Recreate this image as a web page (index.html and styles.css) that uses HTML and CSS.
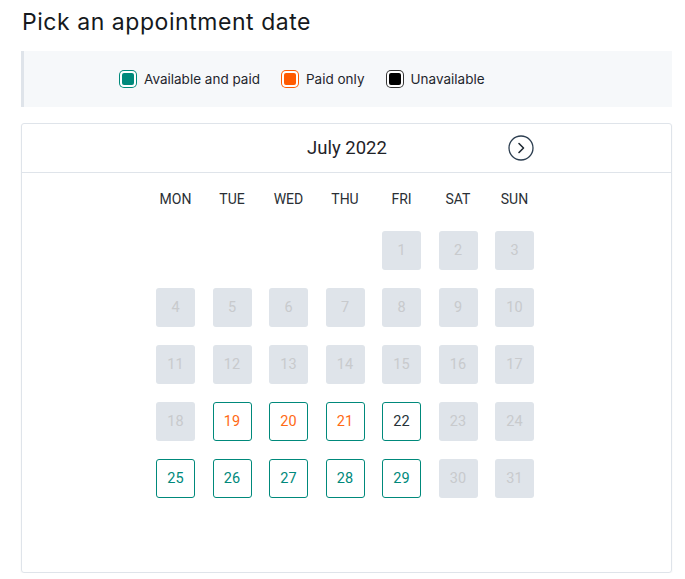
FILE: index.html
```html
<!DOCTYPE html>
<html lang="en">

<head>
  <meta charset="UTF-8">
  <meta name="viewport" content="width=device-width, initial-scale=1.0">
  <title>Pick an appointment date</title>
  <link rel="stylesheet" href="styles.css">
</head>

<body>
  <h1 class="title">Pick an appointment date</h1>
  <div class="legend">
    <div class="legend-item"><span class="swatch swatch-paid"></span>Available and paid</div>
    <div class="legend-item"><span class="swatch swatch-only"></span>Paid only</div>
    <div class="legend-item"><span class="swatch swatch-none"></span>Unavailable</div>
  </div>
  <div class="calendar">
    <div class="cal-head">
      <div class="month">July 2022</div>
      <button class="next" aria-label="Next month">
        <svg width="26" height="26" viewBox="0 0 26 26">
          <circle cx="13" cy="13" r="12" fill="none" stroke="#2c3e50" stroke-width="1.3" />
          <path d="M11 8.5 L15.5 13 L11 17.5" fill="none" stroke="#1f2933" stroke-width="1.6" stroke-linecap="round" stroke-linejoin="round" />
        </svg>
      </button>
    </div>
    <div class="grid">
      <div class="dow">MON</div>
      <div class="dow">TUE</div>
      <div class="dow">WED</div>
      <div class="dow">THU</div>
      <div class="dow">FRI</div>
      <div class="dow">SAT</div>
      <div class="dow">SUN</div>

      <div></div><div></div><div></div><div></div>
      <div class="day off">1</div>
      <div class="day off">2</div>
      <div class="day off">3</div>

      <div class="day off">4</div>
      <div class="day off">5</div>
      <div class="day off">6</div>
      <div class="day off">7</div>
      <div class="day off">8</div>
      <div class="day off">9</div>
      <div class="day off">10</div>

      <div class="day off">11</div>
      <div class="day off">12</div>
      <div class="day off">13</div>
      <div class="day off">14</div>
      <div class="day off">15</div>
      <div class="day off">16</div>
      <div class="day off">17</div>

      <div class="day off">18</div>
      <div class="day open only">19</div>
      <div class="day open only">20</div>
      <div class="day open only">21</div>
      <div class="day open today">22</div>
      <div class="day off">23</div>
      <div class="day off">24</div>

      <div class="day open">25</div>
      <div class="day open">26</div>
      <div class="day open">27</div>
      <div class="day open">28</div>
      <div class="day open">29</div>
      <div class="day off">30</div>
      <div class="day off">31</div>
    </div>
  </div>
</body>

</html>
```

FILE: styles.css
```css
body {
  margin: 0;
  padding: 0 13px 0 21px;
  font-family: Inter, "Noto Sans", sans-serif;
  color: #1c2329;
  background: #fff;
}

.title {
  margin: 0;
  padding: 8px 0 0 1px;
  height: 51px;
  box-sizing: border-box;
  font-size: 23px;
  font-weight: 400;
  letter-spacing: 0.55px;
  line-height: 28px;
  color: #15191d;
}

.legend {
  display: flex;
  align-items: center;
  gap: 22px;
  height: 56px;
  padding-left: 96px;
  background: #f6f8fa;
  border-left: 3px solid #dfe4ea;
}

.legend-item {
  display: flex;
  align-items: center;
  font-size: 13.5px;
  color: #1f262d;
}

.swatch {
  width: 12px;
  height: 12px;
  margin-right: 8px;
  border-radius: 4px;
  border: 2px solid #fff;
  box-shadow: 0 0 0 1px #00897b;
}

.swatch-paid {
  background: #00897b;
}

.swatch-only {
  background: #ff5a00;
  box-shadow: 0 0 0 1px #ff5a00;
}

.swatch-none {
  background: #000;
  box-shadow: 0 0 0 1px #333;
}

.calendar {
  margin-top: 16px;
  height: 450px;
  box-sizing: border-box;
  border: 1px solid #dfe4ea;
  border-radius: 3px;
  box-shadow: 0 1px 2px rgba(0, 0, 0, 0.05);
  font-family: Roboto, "Liberation Sans", sans-serif;
}

.cal-head {
  position: relative;
  display: flex;
  align-items: center;
  justify-content: center;
  height: 48px;
  border-bottom: 1px solid #dfe4ea;
}

.month {
  font-size: 18.5px;
  color: #1f2328;
  padding-left: 1px;
}

.next {
  position: absolute;
  top: 11px;
  left: 486px;
  padding: 0;
  border: 0;
  background: none;
  width: 26px;
  height: 26px;
  cursor: pointer;
}

.grid {
  display: grid;
  grid-template-columns: repeat(7, 56.5px);
  grid-template-rows: 49px;
  grid-auto-rows: 57px;
  justify-content: center;
  justify-items: center;
  padding-top: 9px;
  padding-right: 3px;
}

.dow {
  align-self: start;
  font-size: 14px;
  color: #2a2f35;
  line-height: 34px;
  height: 48px;
}

.day {
  width: 39px;
  height: 39px;
  box-sizing: border-box;
  display: flex;
  align-items: center;
  justify-content: center;
  border-radius: 3px;
  font-size: 14.5px;
}

.off {
  background: #dfe4ea;
  color: #c8cacd;
}

.open {
  border: 1px solid #00897b;
  color: #00897b;
  cursor: pointer;
}

.open.only {
  color: #ff6a14;
}

.open.today {
  color: #263238;
}
```
